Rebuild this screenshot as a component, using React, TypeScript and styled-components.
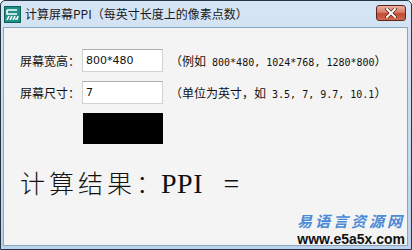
import React from "react";
import styled, { createGlobalStyle } from "styled-components";

const GlobalStyle = createGlobalStyle`
  html, body {
    margin: 0;
    padding: 0;
    background: #ffffff;
  }
`;

const Window = styled.div`
  width: 412px;
  height: 250px;
  box-sizing: border-box;
  border: 1px solid #243546;
  border-radius: 5px 5px 0 0;
  background: linear-gradient(180deg, #d6e5f5 0%, #bcd2eb 100%);
  display: flex;
  flex-direction: column;
  overflow: hidden;
  font-family: "Noto Sans CJK SC", "DejaVu Sans", sans-serif;
`;

const TitleBar = styled.div`
  height: 26px;
  flex: none;
  display: flex;
  align-items: center;
  padding: 0 5px 0 3px;
  gap: 4px;
`;

const Title = styled.div`
  flex: 1;
  font-size: 12px;
  color: #1a1a1a;
  white-space: nowrap;
  margin-top: -1px;
`;

const CloseButton = styled.div`
  width: 30px;
  height: 16px;
  box-sizing: border-box;
  border: 1px solid #5e251c;
  border-radius: 3px;
  background: linear-gradient(180deg, #eab0a2 0%, #d77d69 45%, #c04c35 55%, #d06a4e 100%);
  display: flex;
  align-items: center;
  justify-content: center;
  margin-top: -2px;
`;

const Client = styled.div`
  flex: 1;
  margin: 0 3px 3px 2px;
  background: #f4f4f4;
  border: 1px solid #8aa5c2;
  display: flex;
  flex-direction: column;
  padding: 21px 0 0 16px;
  position: relative;
`;

const Row = styled.div`
  display: flex;
  align-items: center;
  height: 23px;
  margin-bottom: 9px;
  font-size: 12px;
  color: #111;
`;

const Label = styled.div`
  width: 62px;
  flex: none;
`;

const Field = styled.div`
  width: 81px;
  height: 23px;
  box-sizing: border-box;
  background: #ffffff;
  border: 1px solid #d2d2d2;
  border-top-color: #abadb3;
  font-family: "DejaVu Sans", "Liberation Sans", sans-serif;
  font-size: 11px;
  padding: 4px 0 0 3px;
  flex: none;
`;

const Hint = styled.div`
  margin-left: 7px;
  white-space: nowrap;
  font-size: 12px;
`;

const Num = styled.span`
  font-family: "DejaVu Sans Mono", "Liberation Mono", monospace;
  font-size: 10px;
  white-space: pre;
`;

const BlackBox = styled.div`
  width: 80px;
  height: 31px;
  background: #000;
  margin-left: 63px;
`;

const Result = styled.div`
  margin-top: 23px;
  font-family: "Noto Sans CJK SC", serif;
  font-weight: 300;
  font-size: 25px;
  line-height: 30px;
  letter-spacing: 4px;
  color: #111;
  white-space: nowrap;
`;

const Latin = styled.span`
  font-family: "Liberation Serif", serif;
  font-weight: 400;
  font-size: 28px;
  letter-spacing: 0.5px;
  word-spacing: 13px;
  margin-left: -4px;
`;

const Watermark = styled.div`
  position: absolute;
  right: 2px;
  bottom: -3px;
  display: flex;
  flex-direction: column;
  align-items: flex-end;
`;

const SiteName = styled.div`
  font-family: "Noto Sans CJK SC", sans-serif;
  font-weight: 700;
  font-style: italic;
  font-size: 15px;
  line-height: 22px;
  height: 22px;
  margin-bottom: -1px;
  letter-spacing: 3px;
  color: #4a8ad6;
`;

const SiteUrl = styled.div`
  font-family: "Liberation Sans", sans-serif;
  font-weight: 700;
  font-size: 14px;
  line-height: 17px;
  height: 17px;
  color: #111;
`;

const AppIcon = () => (
  <svg width="17" height="17" viewBox="0 0 17 17">
    <rect x="0.5" y="0.5" width="16" height="16" fill="#1f8f86" stroke="#0d5f58" />
    <path d="M3 4 H13 M3 4 V8 H13 M5 10 L3 14 M8 10 L6 14 M11 10 L9 14 M14 10 L13 13 H11" stroke="#ffffff" strokeWidth="1.6" fill="none" />
  </svg>
);

const CloseIcon = () => (
  <svg width="12" height="10" viewBox="0 0 12 10">
    <path d="M2 1 L10 9 M10 1 L2 9" stroke="#5a2218" strokeWidth="3.4" strokeLinecap="square" />
    <path d="M2 1 L10 9 M10 1 L2 9" stroke="#ffffff" strokeWidth="2" strokeLinecap="square" />
  </svg>
);

export default function App() {
  return (
    <>
      <GlobalStyle />
      <Window>
        <TitleBar>
          <AppIcon />
          <Title>计算屏幕PPI（每英寸长度上的像素点数）</Title>
          <CloseButton>
            <CloseIcon />
          </CloseButton>
        </TitleBar>
        <Client>
          <Row>
            <Label>屏幕宽高：</Label>
            <Field>800*480</Field>
            <Hint>
              （例如<Num> 800*480, 1024*768, 1280*800</Num>）
            </Hint>
          </Row>
          <Row>
            <Label>屏幕尺寸：</Label>
            <Field>7</Field>
            <Hint>
              （单位为英寸，如<Num> 3.5, 7, 9.7, 10.1</Num>）
            </Hint>
          </Row>
          <BlackBox />
          <Result>
            计算结果：<Latin>PPI =</Latin>
          </Result>
          <Watermark>
            <SiteName>易语言资源网</SiteName>
            <SiteUrl>www.e5a5x.com</SiteUrl>
          </Watermark>
        </Client>
      </Window>
    </>
  );
}
